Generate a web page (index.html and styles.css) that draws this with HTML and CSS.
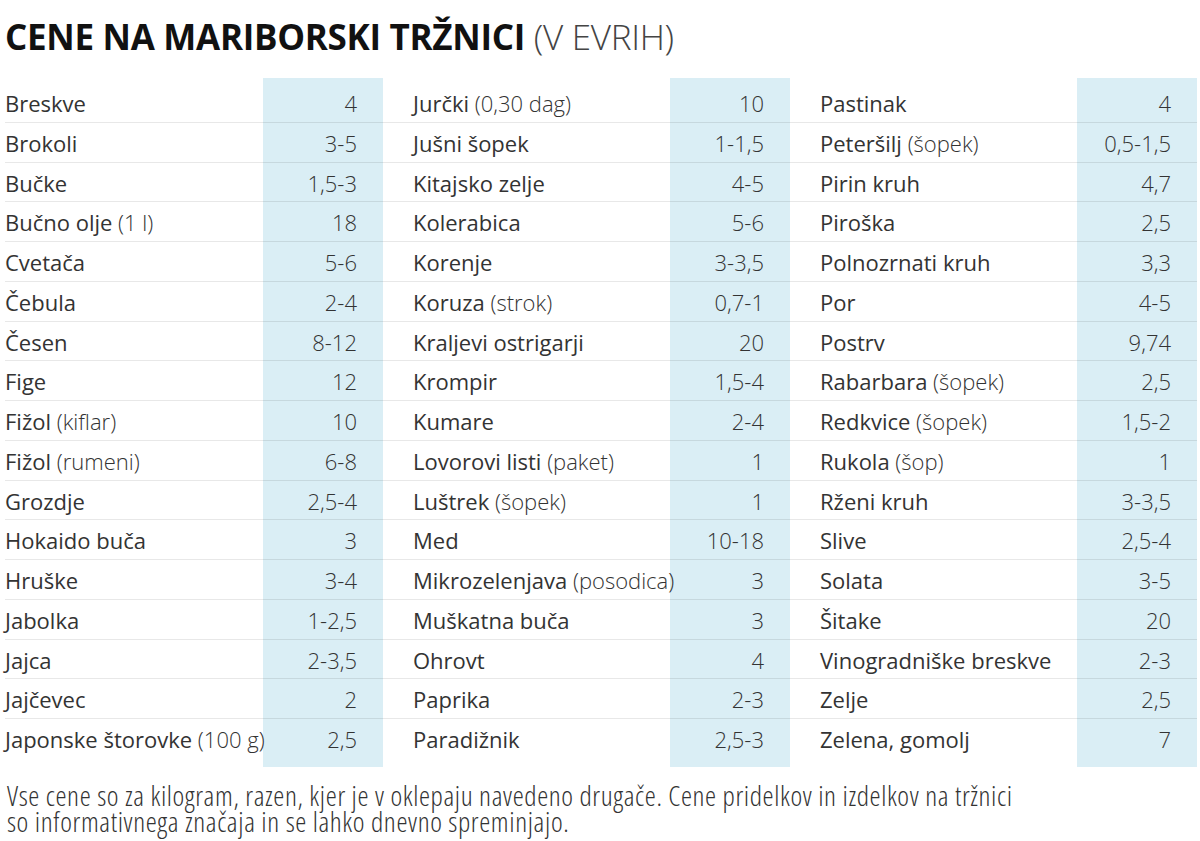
FILE: index.html
```html
<!DOCTYPE html>
<html lang="sl">
<head>
<meta charset="utf-8">
<title>Cene na mariborski tržnici</title>
<link rel="stylesheet" href="styles.css">
</head>
<body>
<div class="page">
  <h1 class="title"><b>CENE NA MARIBORSKI TRŽNICI</b> <span class="unit">(V EVRIH)</span></h1>
  <div class="table">
    <div class="names first">
      <div class="cell">Breskve</div>
      <div class="cell">Brokoli</div>
      <div class="cell">Bučke</div>
      <div class="cell">Bučno olje <span class="lt">(1 l)</span></div>
      <div class="cell">Cvetača</div>
      <div class="cell">Čebula</div>
      <div class="cell">Česen</div>
      <div class="cell">Fige</div>
      <div class="cell">Fižol <span class="lt">(kiflar)</span></div>
      <div class="cell">Fižol <span class="lt">(rumeni)</span></div>
      <div class="cell">Grozdje</div>
      <div class="cell">Hokaido buča</div>
      <div class="cell">Hruške</div>
      <div class="cell">Jabolka</div>
      <div class="cell">Jajca</div>
      <div class="cell">Jajčevec</div>
      <div class="cell">Japonske štorovke <span class="lt">(100 g)</span></div>
    </div>
    <div class="vals">
      <div class="cell">4</div>
      <div class="cell">3-5</div>
      <div class="cell">1,5-3</div>
      <div class="cell">18</div>
      <div class="cell">5-6</div>
      <div class="cell">2-4</div>
      <div class="cell">8-12</div>
      <div class="cell">12</div>
      <div class="cell">10</div>
      <div class="cell">6-8</div>
      <div class="cell">2,5-4</div>
      <div class="cell">3</div>
      <div class="cell">3-4</div>
      <div class="cell">1-2,5</div>
      <div class="cell">2-3,5</div>
      <div class="cell">2</div>
      <div class="cell">2,5</div>
    </div>
    <div class="names">
      <div class="cell">Jurčki <span class="lt">(0,30 dag)</span></div>
      <div class="cell">Jušni šopek</div>
      <div class="cell">Kitajsko zelje</div>
      <div class="cell">Kolerabica</div>
      <div class="cell">Korenje</div>
      <div class="cell">Koruza <span class="lt">(strok)</span></div>
      <div class="cell">Kraljevi ostrigarji</div>
      <div class="cell">Krompir</div>
      <div class="cell">Kumare</div>
      <div class="cell">Lovorovi listi <span class="lt">(paket)</span></div>
      <div class="cell">Luštrek <span class="lt">(šopek)</span></div>
      <div class="cell">Med</div>
      <div class="cell">Mikrozelenjava <span class="lt">(posodica)</span></div>
      <div class="cell">Muškatna buča</div>
      <div class="cell">Ohrovt</div>
      <div class="cell">Paprika</div>
      <div class="cell">Paradižnik</div>
    </div>
    <div class="vals">
      <div class="cell">10</div>
      <div class="cell">1-1,5</div>
      <div class="cell">4-5</div>
      <div class="cell">5-6</div>
      <div class="cell">3-3,5</div>
      <div class="cell">0,7-1</div>
      <div class="cell">20</div>
      <div class="cell">1,5-4</div>
      <div class="cell">2-4</div>
      <div class="cell">1</div>
      <div class="cell">1</div>
      <div class="cell">10-18</div>
      <div class="cell">3</div>
      <div class="cell">3</div>
      <div class="cell">4</div>
      <div class="cell">2-3</div>
      <div class="cell">2,5-3</div>
    </div>
    <div class="names">
      <div class="cell">Pastinak</div>
      <div class="cell">Peteršilj <span class="lt">(šopek)</span></div>
      <div class="cell">Pirin kruh</div>
      <div class="cell">Piroška</div>
      <div class="cell">Polnozrnati kruh</div>
      <div class="cell">Por</div>
      <div class="cell">Postrv</div>
      <div class="cell">Rabarbara <span class="lt">(šopek)</span></div>
      <div class="cell">Redkvice <span class="lt">(šopek)</span></div>
      <div class="cell">Rukola <span class="lt">(šop)</span></div>
      <div class="cell">Rženi kruh</div>
      <div class="cell">Slive</div>
      <div class="cell">Solata</div>
      <div class="cell">Šitake</div>
      <div class="cell">Vinogradniške breskve</div>
      <div class="cell">Zelje</div>
      <div class="cell">Zelena, gomolj</div>
    </div>
    <div class="vals">
      <div class="cell">4</div>
      <div class="cell">0,5-1,5</div>
      <div class="cell">4,7</div>
      <div class="cell">2,5</div>
      <div class="cell">3,3</div>
      <div class="cell">4-5</div>
      <div class="cell">9,74</div>
      <div class="cell">2,5</div>
      <div class="cell">1,5-2</div>
      <div class="cell">1</div>
      <div class="cell">3-3,5</div>
      <div class="cell">2,5-4</div>
      <div class="cell">3-5</div>
      <div class="cell">20</div>
      <div class="cell">2-3</div>
      <div class="cell">2,5</div>
      <div class="cell">7</div>
    </div>
  </div>
  <p class="note">Vse cene so za kilogram, razen, kjer je v oklepaju navedeno drugače. Cene pridelkov in izdelkov na tržnici<br>so informativnega značaja in se lahko dnevno spreminjajo.</p>
</div>
</body>
</html>
```

FILE: styles.css
```css
* { box-sizing: border-box; }
html, body { margin: 0; padding: 0; background: #fff; }
body {
  font-family: "Open Sans", "Noto Sans", sans-serif;
  color: #333;
  width: 1200px;
  height: 841px;
  overflow: hidden;
}
.page { padding: 0 0 0 5px; }
.title {
  margin: 0;
  padding-top: 15px;
  height: 78px;
  font-size: 35px;
  line-height: 44px;
  font-weight: 400;
  color: #111;
  letter-spacing: -0.3px;
}
.title b { font-weight: 700; }
.title .unit { font-weight: 300; color: #444; }
.table {
  display: flex;
  align-items: stretch;
}
.names, .vals {
  padding-top: 5px;
  padding-bottom: 8px;
}
.names {
  width: 287px;
  padding-left: 30px;
  position: relative;
  z-index: 1;
}
.names.first { width: 258px; padding-left: 0; }
.names .cell { margin-left: -30px; padding-left: 30px; }
.names.first .cell { margin-left: 0; padding-left: 0; }
.vals {
  width: 120px;
  background: #daeef5;
}
.cell {
  height: 39.75px;
  line-height: 40px;
  font-size: 22px;
  border-bottom: 1px solid rgba(0, 0, 0, 0.09);
  white-space: nowrap;
}
.cell:last-child { border-bottom-color: transparent; }
.names .cell { font-weight: 400; color: #333; }
.vals .cell {
  text-align: right;
  padding-right: 26px;
  font-weight: 300;
  color: #333;
}
.lt { font-weight: 300; }
.note {
  margin: 15px 0 0 2px;
  font-size: 28px;
  line-height: 26px;
  font-weight: 300;
  font-stretch: 75%;
  letter-spacing: 0.6px;
  color: #333;
}
```
